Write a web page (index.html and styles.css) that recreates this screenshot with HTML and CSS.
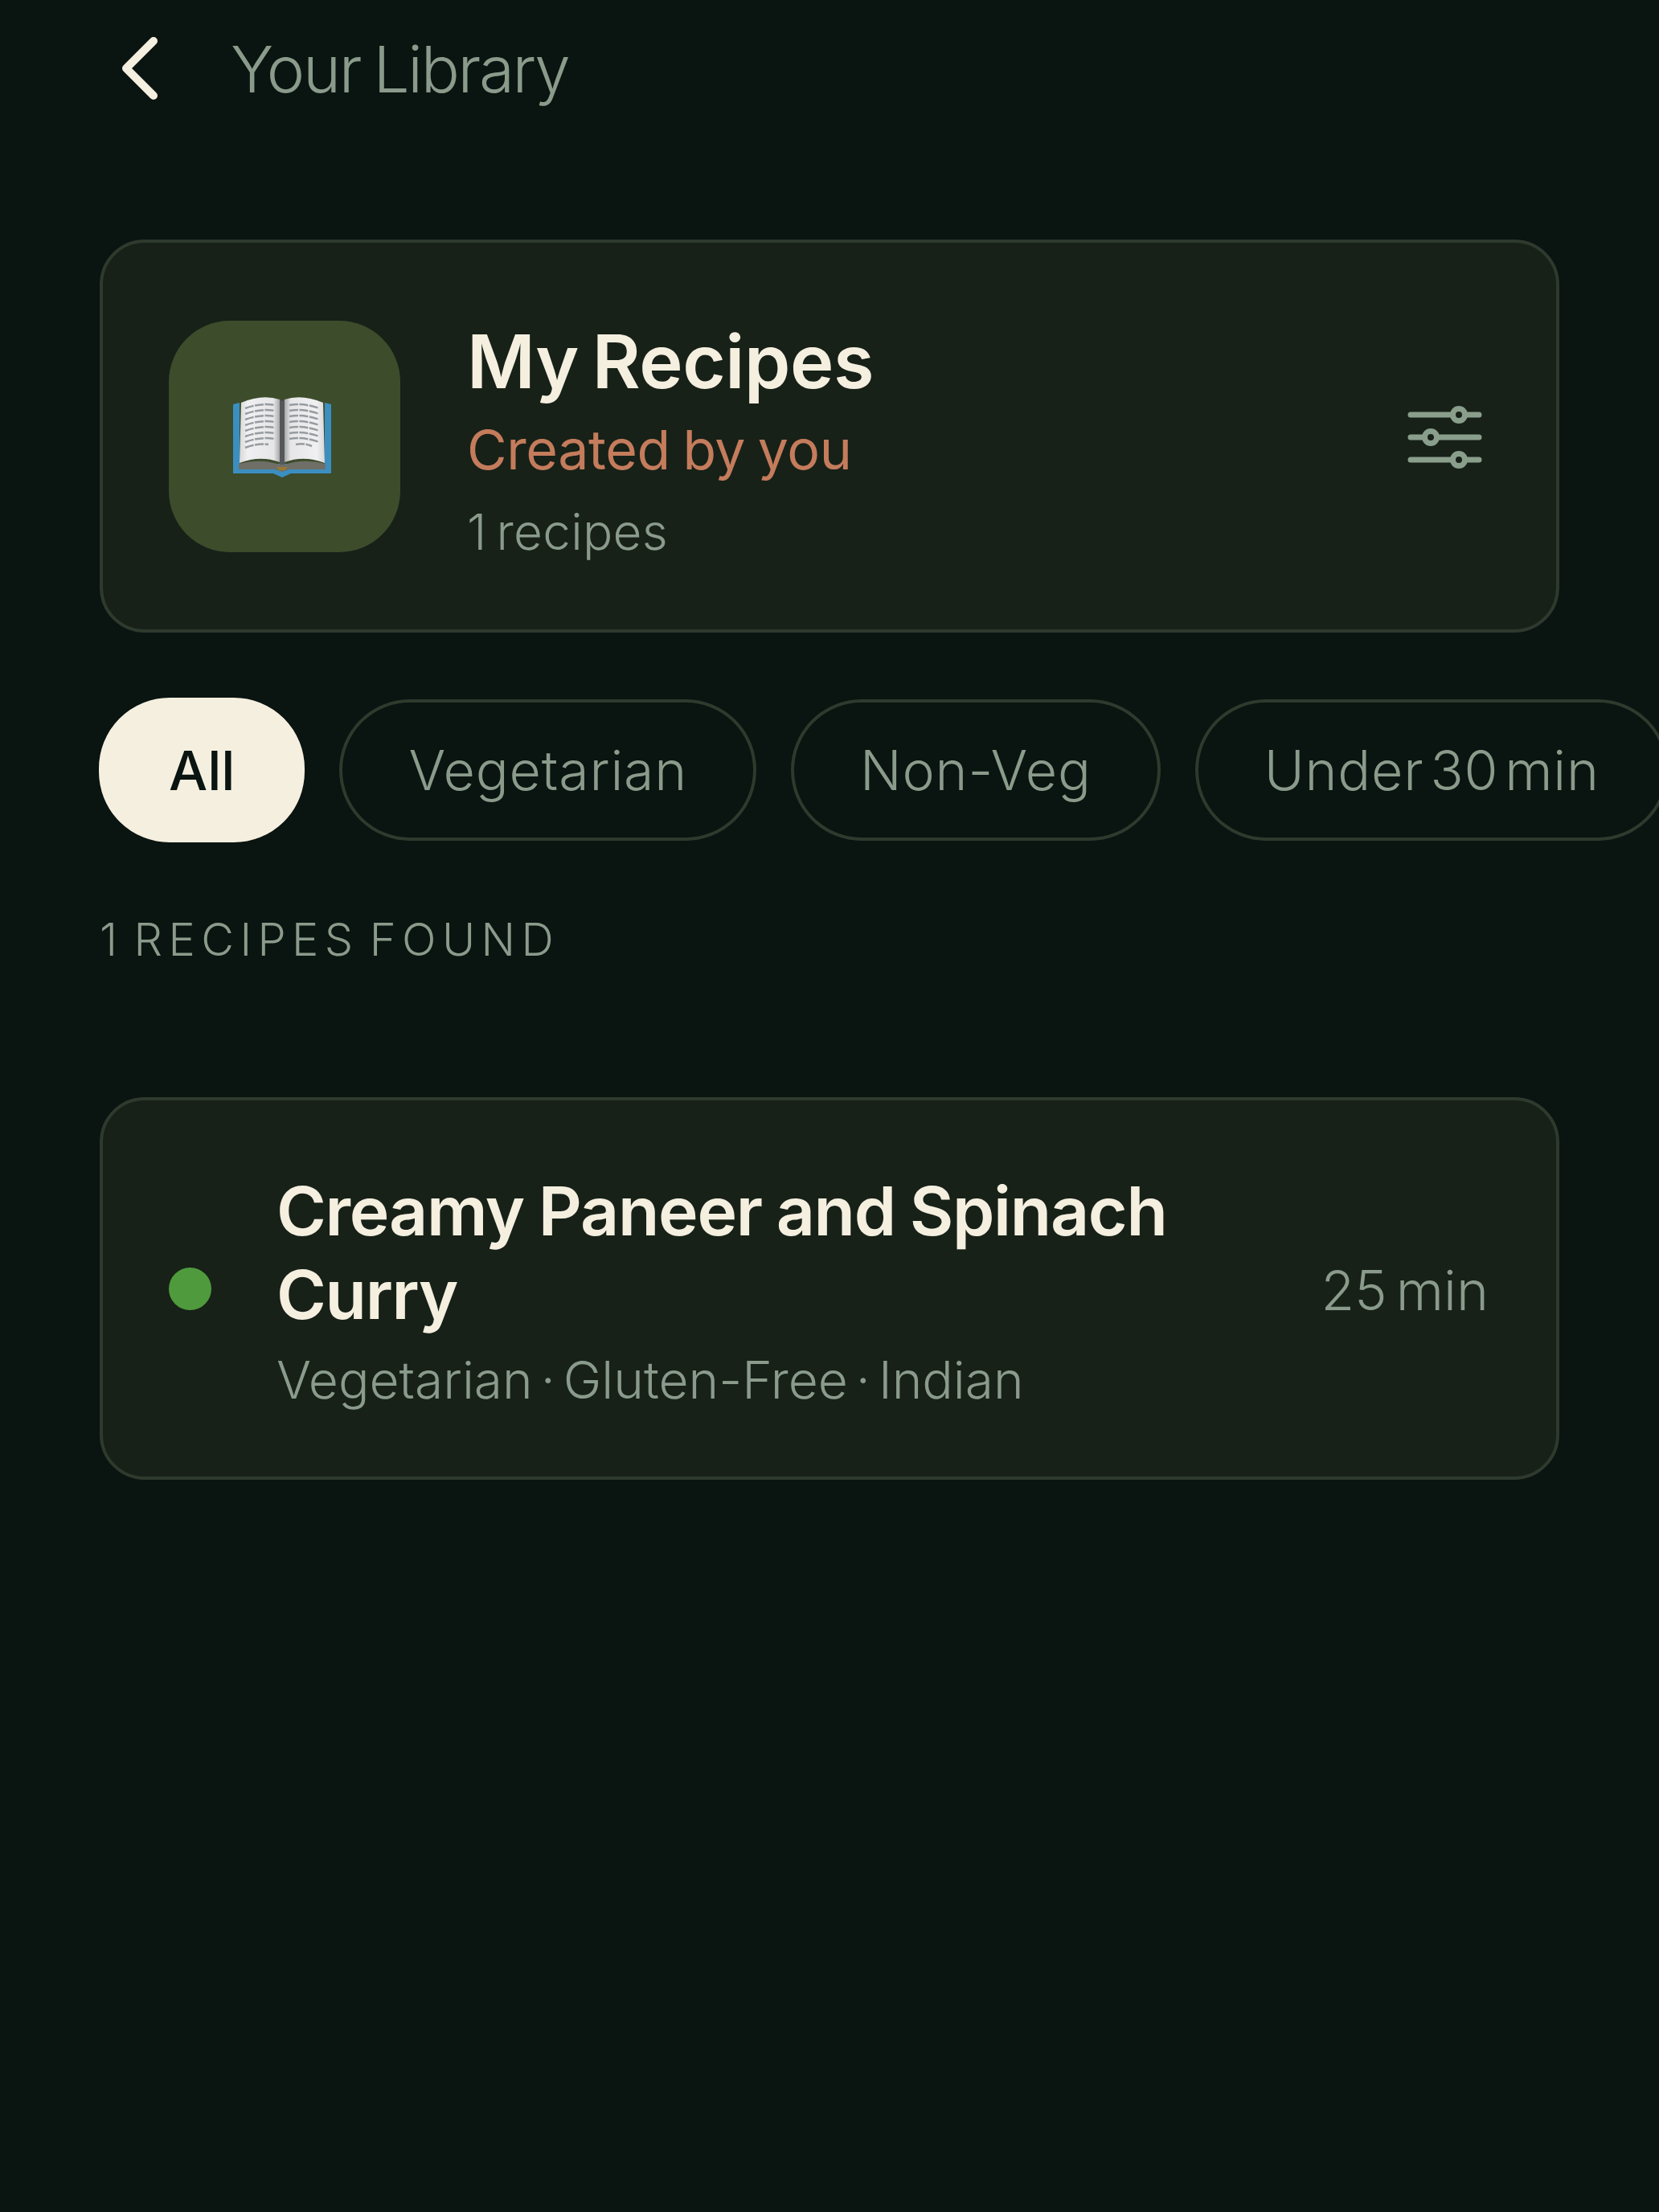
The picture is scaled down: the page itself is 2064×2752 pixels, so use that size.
FILE: index.html
```html
<!DOCTYPE html>
<html lang="en">
<head>
<meta charset="utf-8">
<title>Your Library</title>
<link rel="stylesheet" href="styles.css">
</head>
<body>
<div class="page">
  <header class="topbar">
    <svg class="back" viewBox="0 0 50 80" aria-hidden="true"><path d="M42 6 L8 40 L42 74" /></svg>
    <h1 class="topbar-title">Your Library</h1>
  </header>

  <section class="card hero">
    <div class="tile">
      <svg class="book" viewBox="0 0 122 100" aria-hidden="true">
        <defs>
          <linearGradient id="pageL" x1="0" x2="1" y1="0" y2="0"><stop offset="0" stop-color="#d8d8da"/><stop offset="0.2" stop-color="#f0f0f2"/><stop offset="0.85" stop-color="#e6e6e8"/><stop offset="1" stop-color="#a8a8aa"/></linearGradient>
          <linearGradient id="pageR" x1="1" x2="0" y1="0" y2="0"><stop offset="0" stop-color="#d8d8da"/><stop offset="0.2" stop-color="#f0f0f2"/><stop offset="0.85" stop-color="#e6e6e8"/><stop offset="1" stop-color="#a8a8aa"/></linearGradient>
        </defs>
        <path class="book-cover" d="M0 10 L8 8 L8 84 L114 84 L114 8 L122 10 L122 96 L72 96 L61 101 L50 96 L0 96 Z"/>
        <path class="book-shade" d="M7 84 Q34 77 58 85 L64 85 Q88 77 115 84 L115 91 L70 91 L61 94 L52 91 L7 91 Z"/>
        <path class="book-page" fill="url(#pageL)" d="M10 8 Q36 -3 58 4 L58 82 Q34 73 8 83 Z"/>
        <path class="book-page" fill="url(#pageR)" d="M112 8 Q86 -3 64 4 L64 82 Q88 73 114 83 Z"/>
        <path class="book-spine" d="M58 4 L61 6 L64 4 L64 85 L58 85 Z"/>
        <path class="book-clasp" d="M54 88 L68 88 L64 92 L58 92 Z"/>
        <g class="book-lines">
          <path d="M15 15 Q34 8 52 11"/><path d="M15 22 Q34 15 52 18"/><path d="M15 29 Q34 22 52 25"/><path d="M15 36 Q34 29 52 32"/><path d="M15 43 Q34 36 52 39"/><path d="M15 50 Q34 43 52 46"/><path d="M15 57 Q34 50 52 53"/><path d="M15 64 Q30 58 44 60"/>
          <path d="M70 11 Q88 8 107 15"/><path d="M70 18 Q88 15 107 22"/><path d="M70 25 Q88 22 107 29"/><path d="M70 32 Q88 29 107 36"/><path d="M70 39 Q88 36 107 43"/><path d="M70 46 Q88 43 107 50"/><path d="M70 53 Q88 50 107 57"/><path d="M78 60 Q88 58 98 62"/>
        </g>
      </svg>
    </div>
    <div class="hero-text">
      <h2 class="hero-title">My Recipes</h2>
      <p class="hero-sub">Created by you</p>
      <p class="hero-count">1 recipes</p>
    </div>
    <svg class="sliders" viewBox="0 0 93 68" aria-hidden="true">
      <path d="M4 6 H89 M4 34 H89 M4 62 H89"/>
      <circle cx="64" cy="6" r="7.5"/><circle cx="29" cy="34" r="7.5"/><circle cx="64" cy="62" r="7.5"/>
    </svg>
  </section>

  <nav class="chips">
    <span class="chip chip-active">All</span>
    <span class="chip">Vegetarian</span>
    <span class="chip">Non-Veg</span>
    <span class="chip">Under 30 min</span>
  </nav>

  <p class="found">1 RECIPES FOUND</p>

  <article class="card recipe">
    <span class="dot"></span>
    <div class="recipe-text">
      <h3 class="recipe-title">Creamy Paneer and Spinach Curry</h3>
      <p class="recipe-tags">Vegetarian · Gluten-Free · Indian</p>
    </div>
    <span class="recipe-time">25 min</span>
  </article>
</div>
</body>
</html>
```
FILE: styles.css
```css
* { box-sizing: border-box; }
html, body { margin: 0; height: 100%; background: #0a1410; }
body { font-family: "Inter", "Liberation Sans", sans-serif; overflow: hidden; }
h1, h2, h3, p { margin: 0; font-weight: 400; }
.page { width: 2064px; height: 2752px; padding: 0 124px; overflow: hidden; }

.topbar { height: 170px; display: flex; align-items: center; margin-bottom: 128px; padding-left: 25px; }
.back { width: 50px; height: 80px; fill: none; stroke: #f5efe0; stroke-width: 10; stroke-linecap: round; stroke-linejoin: round; flex: none; margin-right: 88px; }
.topbar-title { font-size: 80px; font-weight: 350; color: #8a9a8b; letter-spacing: -2.3px; word-spacing: -4px; }

.card { width: 1816px; background: #172118; border: 4px solid #2f3a2e; border-radius: 56px; display: flex; align-items: center; }

.hero { height: 489px; padding: 0 92px 0 82px; }
.tile { width: 288px; height: 288px; border-radius: 76px; background: #3d4c2b; display: flex; align-items: center; justify-content: center; flex: none; margin-right: 83px; }
.book { width: 122px; height: 100px; overflow: visible; margin-right: 6px; }
.book-cover { fill: #3b8fc0; }
.book-shade { fill: #6f6f68; }
.book-spine { fill: #55585a; }
.book-clasp { fill: #9a7a30; }
.book-lines path { fill: none; stroke: #979ba0; stroke-width: 2.5; stroke-dasharray: 11 1.5; }
.hero-text { flex: 1; display: flex; flex-direction: column; padding-top: 12px; }
.hero-title { font-size: 92px; font-weight: 560; color: #f5efe0; letter-spacing: -0.4px; word-spacing: -6px; line-height: 112px; }
.hero-sub { font-size: 68px; font-weight: 400; color: #c47c5c; letter-spacing: -0.4px; word-spacing: -3px; line-height: 90px; margin-top: 8px; }
.hero-count { font-size: 62px; font-weight: 350; color: #8a9a8b; letter-spacing: 0.3px; word-spacing: -6px; line-height: 84px; margin-top: 16px; }
.sliders { width: 93px; height: 68px; fill: #172118; stroke: #8a9e8c; stroke-width: 7; stroke-linecap: round; flex: none; overflow: visible; margin-top: 3px; }

.chips { display: flex; gap: 43px; margin: 81px 0 0 -1px; width: 2100px; align-items: center; }
.chip { height: 176px; padding: 0 82px; border: 4px solid #2f3a2e; border-radius: 88px; display: flex; align-items: center; font-size: 68px; font-weight: 350; color: #8a9a8b; letter-spacing: 0.8px; word-spacing: -12px; flex: none; }
.chip-active { height: 180px; padding: 0 83px; background: #f5efe0; border-color: #f5efe0; color: #0a1410; font-weight: 450; letter-spacing: 0; }

.found { font-size: 56px; font-weight: 350; color: #8a9a8b; letter-spacing: 7.4px; word-spacing: -10px; line-height: 70px; margin-top: 86px; }

.recipe { height: 476px; margin-top: 161px; padding: 0 84px 0 82px; }
.dot { width: 53px; height: 53px; border-radius: 50%; background: #4f9a3d; flex: none; margin-right: 81px; }
.recipe-text { width: 1200px; flex: none; padding-top: 8px; }
.recipe-title { font-size: 84px; font-weight: 560; color: #f5efe0; letter-spacing: -1.3px; word-spacing: -2px; line-height: 104px; }
.recipe-tags { font-size: 64px; font-weight: 350; color: #8a9a8b; word-spacing: -8px; line-height: 84px; margin-top: 12px; }
.recipe-time { margin: 3px 0 0 auto; font-size: 68px; font-weight: 350; color: #8a9a8b; word-spacing: -8px; }
```
